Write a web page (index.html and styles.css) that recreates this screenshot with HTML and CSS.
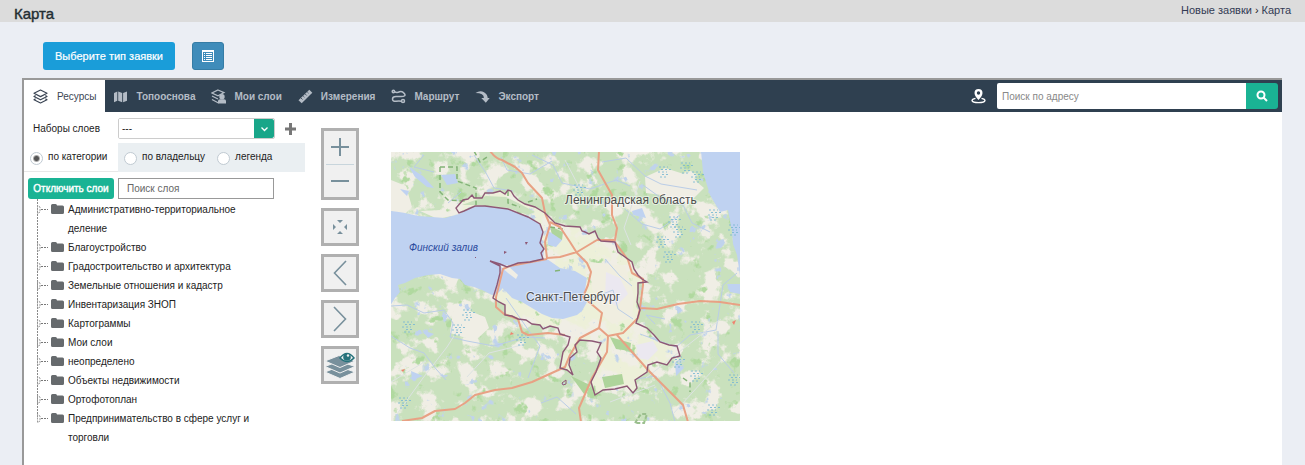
FILE: index.html
```html
<!DOCTYPE html>
<html lang="ru">
<head>
<meta charset="utf-8">
<title>Карта</title>
<link rel="stylesheet" href="styles.css">
</head>
<body>
<header class="page-head">
  <h1 class="page-title">Карта</h1>
  <nav class="crumbs" aria-label="Навигация"><a href="#">Новые заявки</a><span class="crumb-sep">›</span><a href="#">Карта</a></nav>
</header>
<div class="actions">
  <button type="button" class="btn-primary">Выберите тип заявки</button>
  <button type="button" class="btn-list" aria-label="Список">
    <svg width="12" height="12" viewBox="0 0 12 12"><path fill="#fff" fill-rule="evenodd" d="M0 0H12V12H0ZM1 2V11H11V2Z"/><path stroke="#fff" d="M2 3.500H3M4 3.500H10M2 5.500H3M4 5.500H10M2 7.500H3M4 7.500H10M2 9.500H3M4 9.500H10"/></svg>
  </button>
</div>
<main class="widget">
  <div class="toolbar">
    <div class="tabs">
      <button type="button" class="tab tab-active"><svg class="tab-icon" viewBox="0 0 15 15"><g fill="none" stroke="currentColor" stroke-width="1.200" stroke-linejoin="round"><path d="M7.500 1L14 4.300 7.500 7.600 1 4.300Z"/><path d="M2.600 6.600L1 7.500 7.500 10.800 14 7.500 12.400 6.600M2.600 9.800L1 10.700 7.500 14 14 10.700 12.400 9.800"/></g></svg>Ресурсы</button>
      <button type="button" class="tab"><svg class="tab-icon" viewBox="0 0 15 15"><path fill="currentColor" d="M1 4L4.300 2.500V11.800L1 13.300ZM5.200 2.500L9.200 4V13.300L5.200 11.800ZM10.100 4L14 2.500V11.800L10.100 13.300Z"/></svg>Топооснова</button>
      <button type="button" class="tab"><svg class="tab-icon" viewBox="0 0 15 15"><g fill="none" stroke="currentColor" stroke-width="1.200"><path d="M7 1L13 3.600 7 6.800 1 4ZM1 7L7 10M1 10.400L7.500 14"/></g><g fill="currentColor"><circle cx="11" cy="7.700" r="2.700"/><path d="M7 14.500V12Q7 10.500 9 10.300H13Q15 10.500 15 12V14.500Z"/></g></svg>Мои слои</button>
      <button type="button" class="tab"><svg class="tab-icon" viewBox="0 0 15 15"><path fill="currentColor" d="M.500 11.300L11.300.700 14.300 3.700 3.700 14.300Z"/><path stroke="#2f4050" stroke-width=".800" d="M3 9L4.500 10.500M5.200 7L6.400 8.200M7.200 5L8.700 6.500M9.300 3L10.500 4.200"/></svg>Измерения</button>
      <button type="button" class="tab"><svg class="tab-icon" viewBox="0 0 15 15"><g fill="none" stroke="currentColor" stroke-width="1.500"><path d="M3.500 2.800Q6 4 8.500 2.800T13.300 4.500 10 7.500H5Q1.500 7.500 1.500 10T5 12.300Q8 11.500 10.500 12.300"/><circle cx="2.400" cy="2.500" r="1.200"/><circle cx="12" cy="12" r="1.500"/></g></svg>Маршрут</button>
      <button type="button" class="tab"><svg class="tab-icon" viewBox="0 0 15 15"><path fill="currentColor" d="M.500 4Q5 1 9 3.200 12.700 5.500 12.700 9H14.700L10.800 13.700 6.300 9H8.900Q9 4 .500 4Z"/></svg>Экспорт</button>
    </div>
    <form class="address">
      <svg class="pin" width="15" height="16" viewBox="0 0 15 16"><path fill="#fff" fill-rule="evenodd" d="M7.500 1A4 4 0 0 1 11.500 5Q11.500 8 7.500 12 3.500 8 3.500 5A4 4 0 0 1 7.500 1ZM7.500 3.300A1.700 1.700 0 1 0 7.500 6.700 1.700 1.700 0 1 0 7.500 3.300Z"/><path fill="none" stroke="#fff" stroke-width="1.300" d="M4.500 10.300Q1 11 1 12.500 1.500 14.600 7.500 14.600T14 12.500Q14 11 10.500 10.300"/></svg>
      <input class="address-input" type="text" placeholder="Поиск по адресу" aria-label="Поиск по адресу">
      <button type="button" class="address-btn" aria-label="Найти"><svg width="12" height="12" viewBox="0 0 12 12"><g fill="none" stroke="#fff" stroke-width="2"><circle cx="5" cy="5" r="3.500"/><path d="M7.500 7.500L11 11"/></g></svg></button>
    </form>
  </div>
  <div class="content">
    <aside class="side">
      <div class="row-set">
        <label class="set-label" for="layer-set">Наборы слоев</label>
        <span class="select-box">
          <select id="layer-set"><option>---</option></select>
          <span class="select-arrow"><svg width="9" height="6" viewBox="0 0 9 6"><path fill="none" stroke="#fff" stroke-width="1.300" d="M1.500 1.500L4.500 4.500 7.500 1.500"/></svg></span>
        </span>
        <button type="button" class="add" aria-label="Добавить"><svg width="13" height="12" viewBox="0 0 13 12"><path stroke="#777" stroke-width="3" d="M1 6H12M6.500 0V12"/></svg></button>
      </div>
      <div class="row-mode">
        <label class="mode mode-on"><input type="radio" name="mode" checked>по категории</label>
        <div class="mode-rest">
          <label class="mode"><input type="radio" name="mode">по владельцу</label>
          <label class="mode"><input type="radio" name="mode">легенда</label>
        </div>
      </div>
      <div class="row-find">
        <button type="button" class="btn-off">Отключить слои</button>
        <input class="layer-input" type="text" placeholder="Поиск слоя" aria-label="Поиск слоя">
      </div>
      <svg class="defs" width="0" height="0"><defs><g id="folder"><path fill="none" stroke="#999" d="M.500 5.500V13.500L3 12V7Z" stroke-dasharray="2 1"/><path stroke="#777" stroke-dasharray="2 1" d="M4 9.500H11"/><path fill="#666a6d" d="M14 5.500Q14 4 15.500 4H18.500Q20 4 20 5.500H25.500Q27 5.500 27 7V12.500Q27 14 25.500 14H15.500Q14 14 14 12.500Z"/></g></defs></svg>
      <ul class="tree">
        <li><svg class="node" viewBox="0 0 28 19"><use href="#folder"/></svg><span>Административно-территориальное деление</span></li>
        <li><svg class="node" viewBox="0 0 28 19"><use href="#folder"/></svg><span>Благоустройство</span></li>
        <li><svg class="node" viewBox="0 0 28 19"><use href="#folder"/></svg><span>Градостроительство и архитектура</span></li>
        <li><svg class="node" viewBox="0 0 28 19"><use href="#folder"/></svg><span>Земельные отношения и кадастр</span></li>
        <li><svg class="node" viewBox="0 0 28 19"><use href="#folder"/></svg><span>Инвентаризация ЗНОП</span></li>
        <li><svg class="node" viewBox="0 0 28 19"><use href="#folder"/></svg><span>Картограммы</span></li>
        <li><svg class="node" viewBox="0 0 28 19"><use href="#folder"/></svg><span>Мои слои</span></li>
        <li><svg class="node" viewBox="0 0 28 19"><use href="#folder"/></svg><span>неопределено</span></li>
        <li><svg class="node" viewBox="0 0 28 19"><use href="#folder"/></svg><span>Объекты недвижимости</span></li>
        <li><svg class="node" viewBox="0 0 28 19"><use href="#folder"/></svg><span>Ортофотоплан</span></li>
        <li><svg class="node" viewBox="0 0 28 19"><use href="#folder"/></svg><span>Предпринимательство в сфере услуг и торговли</span></li>
      </ul>
    </aside>
    <div class="tools">
      <div class="tool zoom">
        <button type="button" aria-label="Приблизить"><svg width="20" height="20" viewBox="0 0 20 20"><path stroke="#78909c" stroke-width="2" d="M1 10H19M10 1V19"/></svg></button>
        <button type="button" aria-label="Отдалить"><svg width="20" height="20" viewBox="0 0 20 20"><path stroke="#78909c" stroke-width="2" d="M1 10H19"/></svg></button>
      </div>
      <button type="button" class="tool" aria-label="Весь экстент"><svg width="16" height="16" viewBox="0 0 16 16"><path fill="#78909c" d="M5 1H11L8 4ZM5 15H11L8 12ZM1 5V11L4 8ZM15 5V11L12 8Z"/></svg></button>
      <button type="button" class="tool" aria-label="Назад"><svg width="30" height="30" viewBox="0 0 30 30"><path fill="none" stroke="#78909c" stroke-width="1.600" d="M21 3L9.500 15 21 27"/></svg></button>
      <button type="button" class="tool" aria-label="Вперёд"><svg width="30" height="30" viewBox="0 0 30 30"><path fill="none" stroke="#78909c" stroke-width="1.600" d="M9 3L20.500 15 9 27"/></svg></button>
      <button type="button" class="tool" aria-label="Видимость слоёв"><svg width="30" height="30" viewBox="0 0 30 30"><g fill="#78909c" stroke="#f0f0f0"><path d="M0 22L14 16.500 30 22 15 28.500Z"/><path d="M0 16.500L14 11 30 16.500 15 23Z"/><path d="M0 11L14 5.500 30 11 15 17.500Z"/></g><path fill="#f0f0f0" stroke="#26727b" stroke-width="1.500" d="M15 8Q22 -1 29 8 22 15 15 8Z"/><circle cx="22" cy="7" r="3.800" fill="#26727b"/><circle cx="23" cy="5.500" r="1.200" fill="#eee"/></svg></button>
    </div>
    <div class="map">
      <svg width="350" height="274" viewBox="390 151 350 274" role="img" aria-label="Карта Санкт-Петербурга">
        <defs>
          <clipPath id="frame"><rect x="391" y="152" width="349" height="269"/></clipPath>
          <filter id="fields" x="0" y="0" width="1" height="1" color-interpolation-filters="sRGB"><feTurbulence type="fractalNoise" baseFrequency=".050" numOctaves="5" seed="8"/><feColorMatrix values="0 0 0 0 .941 0 0 0 0 .933 0 0 0 0 .898 10 0 0 0 -5.200"/></filter>
          <filter id="groves" x="0" y="0" width="1" height="1" color-interpolation-filters="sRGB"><feTurbulence type="fractalNoise" baseFrequency=".070" numOctaves="4" seed="23"/><feColorMatrix values="0 0 0 0 .690 0 0 0 0 .851 0 0 0 0 .624 0 9 0 0 -6.100"/></filter>
          <filter id="lakes" x="0" y="0" width="1" height="1" color-interpolation-filters="sRGB"><feTurbulence type="fractalNoise" baseFrequency=".080" numOctaves="4" seed="41"/><feColorMatrix values="0 0 0 0 .753 0 0 0 0 .827 0 0 0 0 .925 0 0 12 0 -8.300"/></filter>
          <g id="marsh" stroke="#7db9d3" stroke-width=".900" stroke-dasharray="2 2"><path d="M0 0H9M2 2.500H12M-1 5H8M3 7.500H11M1 10H7"/></g>
          <path id="city" d="M459 213L456 208 463 200 468 199 472 195 474 198 482 198 485 193 493 193 500 191 505 194 508 190 511 191 514 196 518 200 525 204 535 207 545 213 550 218 555 223 565 226 580 227 582 231 585 232 589 234 595 231 598 238 601 241 615 242 618 252 625 257 632 262 634 269 638 275 642 279 647 282 638 283 638 293 637 302 640 310 636 323 647 328 654 335 660 342 669 345 677 346 680 356 672 358 667 365 657 362 648 365 647 372 641 376 635 380 637 388 633 393 627 386 615 389 603 390 595 395 591 382 596 372 601 358 597 352 601 343 592 341 580 340 575 345 577 352 570 358 569 365 573 375 567 370 560 368 563 352 568 345 570 337 560 334 558 328 550 326 543 329 540 325 532 324 526 320 518 319 512 316 505 315 505 305 499 302 493 298 497 285 500 273 500 266 490 261 500 264 507 267 518 263 530 262 543 259 541 253 544 249 540 243 543 232 540 224 528 217 508 209 485 206 475 206 464 211Z"/>
        </defs>
        <g clip-path="url(#frame)">
          <rect x="390" y="151" width="350" height="271" fill="#c9e1bd"/>
          <use href="#city" fill="#edf0d9"/>
          <rect x="390" y="151" width="350" height="271" filter="url(#fields)"/>
          <rect x="390" y="151" width="350" height="271" filter="url(#groves)"/>
          <rect x="390" y="151" width="350" height="271" filter="url(#lakes)"/>
          <path fill="#f0eee5" d="M453 312L470 311 485 317 489 328 477 339 463 337 450 333ZM645 177L665 168 690 176 704 188 688 204 672 201 662 195 646 193ZM391 180L406 186 412 207 403 216 391 211ZM420 211L443 210 456 215 438 219Z"/>
          <path fill="#f0eee0" d="M590 262L625 266 634 296 632 318 612 324 597 310 592 289Z"/>
          <path fill="#ebe8f0" d="M606 272L620 278 628 294 616 306 605 299ZM636 345L653 341 658 350 648 360 638 358Z"/>
          <path fill="#aed49b" d="M550 226L563 232 562 240 553 240ZM610 337L631 343 630 351 616 349ZM571 376L590 385 584 394ZM602 377L622 374 624 384 605 388Z"/>
          <path fill="#c9e1bd" d="M462 205L486 196 506 197 518 203 535 212 528 215 508 208 482 205Z"/>
          <g fill="#bfd2f1">
            <path d="M390 211Q402 212 418 216L445 218 459 214 475 206 485 206 508 209 528 217 540 224 543 232 540 243 544 250 543 258 547 259 560 268 575 271 587 278 585 290 583 297 587 302 582 311 577 315 570 317 563 319 552 318 542 314 532 308 522 302 512 298 503 288 497 294 492 295 482 290 474 287 465 285 460 279 452 278 440 274 428 275 415 278 405 283 398 285 400 292 395 298 390 306Z"/>
            <path d="M701 151L703 172 710 195 720 212 728 210 732 232 733 244 737 255 740 276V151Z"/>
            <path d="M409 167L423 176 434 188 427 187 415 177ZM441 175L455 174 458 183 447 185ZM400 189L409 191 407 196ZM547 230L562 240 556 247 548 245ZM632 211L642 208 646 218 633 215ZM422 330L434 334 428 338ZM727 284H740V294L730 292ZM675 362L684 368 676 376ZM411 371L423 376 412 380Z"/>
          </g>
          <path fill="#f0eee5" d="M500 266L507 265 518 275 516 279 508 273Z"/>
          <g fill="none" stroke="#bacde7">
            <path d="M391 306L407 305 424 313 444 310 453 323 450 337 467 341 494 346 525 337 545 338M391 336L410 348 424 353 436 369 446 380M424 155L414 167 434 172M474 155L486 173 494 188 513 191M501 157L507 170 530 174 552 161M532 155L553 165 562 183 590 189 616 180 630 186M602 162L626 158 645 176 661 184 697 190M643 185L661 198 683 205 692 223 710 232M625 209L642 224 660 229 680 215M640 334L676 347 690 335 716 330 723 285 737 273M718 331L718 354 734 373M636 379L656 376 670 403 675 422M587 300L613 290 618 309 633 319M605 259L620 276 632 286M506 298L527 328 540 346 528 378M448 203L461 192M655 324L646 315 665 319M541 403L557 397 576 414"/>
            <path stroke="#dce3e2" d="M397 414L423 378 447 347 459 328M467 377L489 353 522 345M640 181L624 228 631 245M673 414L721 361M610 402L655 385M646 378L721 319M391 382L426 361M565 160L589 206"/>
          </g>
          <use href="#marsh" x="403" y="322"/><use href="#marsh" x="453" y="325"/><use href="#marsh" x="463" y="310"/><use href="#marsh" x="517" y="335"/><use href="#marsh" x="664" y="252"/><use href="#marsh" x="657" y="237"/><use href="#marsh" x="669" y="217"/><use href="#marsh" x="692" y="172"/><use href="#marsh" x="681" y="163"/><use href="#marsh" x="709" y="210"/><use href="#marsh" x="729" y="225"/><use href="#marsh" x="674" y="227"/><use href="#marsh" x="691" y="322"/><use href="#marsh" x="729" y="375"/><use href="#marsh" x="691" y="371"/><use href="#marsh" x="708" y="405"/><use href="#marsh" x="673" y="357"/><use href="#marsh" x="399" y="398"/><use href="#marsh" x="659" y="167"/><use href="#marsh" x="574" y="185"/>
          <g fill="none" stroke="#83b477" stroke-width="1.500" stroke-dasharray="5 3"><path d="M440 167H457V181L476 188 476 205M440 167V192L448 200 465 201M474 151L480 162 487 157M508 191V203L520 207M528 202L537 199M550 227L563 229M555 271L562 270M683 378L690 383 690 392"/></g>
          <g fill="none" stroke="#e8a184" stroke-width="2" stroke-linejoin="round">
            <path d="M490 151Q496 159 502 160L515 167 522 173 528 183 542 198 545 213 550 225 545 242 547 258 560 257 577 252 597 240 615 240 617 228 612 215 612 195 598 170 599 151M550 222L560 227 570 242 577 253 587 263 591 272 588 285 583 297 602 313 599 328 580 338 570 355 565 367 532 382 512 388 495 390 475 395 465 403 455 409 435 411 422 418 402 421M547 259L510 266 503 269 499 285 496 297 496 307 504 314 518 319 522 332 528 335 548 333 565 335"/>
            <path d="M615 242L628 260 632 273 643 279 643 285 640 308 657 309 678 304 700 301 720 302 740 305M640 308L638 318 623 333 608 336 599 328M608 336L607 352 592 378 579 408 581 422M617 335L648 370 683 405 688 422"/>
          </g>
          <use href="#city" fill="none" stroke="#8d5875" stroke-width="1.400"/>
          <g fill="#8d5875"><path d="M504 251L507 252 504 254ZM525 242L528 242 526 245ZM475 257H476V258H475Z"/><path fill="none" stroke="#8d5875" d="M562 383L566 380 566 384 563 385Z"/></g>
          <path fill="#ef836f" d="M511 332L514 334 510 335ZM401 370L405 369 403 372ZM732 322L736 320 734 325Z"/>
        </g>
        <path fill="none" stroke="#9bbf8e" stroke-width="2" stroke-dasharray="4 2" d="M635 423L641 414 647 414 644 423Z"/>
        <text class="sea" x="409" y="251">Финский залив</text>
        <text class="place" x="565" y="204">Ленинградская область</text>
        <text class="place" x="526" y="301">Санкт-Петербург</text>
      </svg>
    </div>
  </div>
</main>
</body>
</html>
```
FILE: styles.css
```css
* { box-sizing: border-box; }
body {
  margin: 0;
  min-height: 100vh;
  display: flex;
  flex-direction: column;
  background: #ebeef4;
  color: #222;
  font: 10px/19px "Liberation Sans", Arial, sans-serif;
}
button, input, select { font: inherit; color: inherit; margin: 0; }
button { border: 0; padding: 0; background: none; display: flex; align-items: center; justify-content: center; }
svg { display: block; flex: none; }

.page-head {
  display: flex;
  justify-content: space-between;
  height: 22px;
  padding: 0 14px;
  background: #dcdcdc;
}
.page-title { margin: 4px 0 0; font-size: 15px; line-height: 19px; font-weight: 400; color: #222d32; -webkit-text-stroke: 0.4px #222d32; }
.crumbs { display: flex; gap: 3px; font-size: 11px; line-height: 21px; }
.crumbs a { color: #333b54; text-decoration: none; }

.actions { display: flex; gap: 17px; padding: 20px 43px 8px; }
.btn-primary {
  height: 28px;
  padding: 0 12px;
  border-radius: 3px;
  background: #1a9dd9;
  color: #fff;
  font-size: 11px;
  -webkit-text-stroke: 0.2px #fff;
}
.btn-list { width: 32px; height: 28px; border: 1px solid #357ca5; border-radius: 3px; background: #3f8cba; }

.widget {
  flex: 1;
  display: flex;
  flex-direction: column;
  margin: 0 23px 0 22px;
  border: solid #999;
  border-width: 2px 0 0 2px;
  background: #fff;
}
.toolbar { display: flex; justify-content: space-between; height: 32px; background: #2f4050; }
.tabs { display: flex; }
.tab { gap: 8px; padding: 0 8px; color: #b4bcc6; font-weight: 700; }
.tab-active { gap: 9px; padding: 0 9px; background: #fff; color: #3b4554; font-weight: 400; }
.tab-icon { width: 15px; height: 15px; }
.address { display: flex; align-items: center; padding: 0 4px 0 0; }
.pin { margin-right: 11px; }
.address-input { width: 249px; height: 26px; padding: 0 5px; border: 0; border-radius: 2px 0 0 2px; background: #fff; }
.address-input::placeholder { color: #888; opacity: 1; }
.address-btn { width: 32px; height: 26px; border-radius: 0 3px 3px 0; background: #1ab394; }

.content { flex: 1; display: flex; align-items: flex-start; }
.side { width: 281px; }
.row-set { display: grid; grid-template-columns: 94px 157px 30px; align-items: center; height: 31px; padding-top: 2px; }
.set-label { padding-left: 9px; }
.select-box { display: grid; grid-template-columns: 1fr 20px; height: 21px; border: 1px solid #ccc; border-radius: 2px; overflow: hidden; }
.select-box select { grid-area: 1 / 1 / 2 / 3; appearance: none; border: 0; padding: 0 3px; background: #fff; }
.select-arrow { grid-area: 1 / 2; display: flex; align-items: center; justify-content: center; background: #18a689; border-radius: 0 2px 2px 0; pointer-events: none; z-index: 1; }
.row-mode { display: grid; grid-template-columns: 94px 1fr; height: 29px; }
.mode { display: flex; gap: 5px; line-height: 28px; }
.mode input {
  appearance: none;
  width: 13px;
  height: 13px;
  margin-top: 9px;
  border: 1px solid #c0cad2;
  border-radius: 50%;
  background: #fff;
}
.mode input:checked { background: radial-gradient(#555 0 2px, #fff 4px); }
.mode-on { padding-left: 6px; border-bottom: 1px solid #e8e8e8; }
.mode-rest { display: flex; gap: 12px; padding-left: 6px; background: #eaeff2; }
.row-find { display: flex; gap: 4px; padding: 6px 4px 0; }
.btn-off { width: 86px; height: 21px; border-radius: 3px; background: #1ab394; color: #fff; -webkit-text-stroke: 0.4px #fff; }
.layer-input { width: 156px; height: 21px; padding: 0 8px; border: 1px solid #999; background: #fff; }
.layer-input::placeholder { color: #666; opacity: 1; }
.defs { position: absolute; }
.tree { list-style: none; margin: 0 0 0 13px; padding: 1px 0 0; background: repeating-linear-gradient(#888 0 2px, transparent 2px 3px) 0 0 / 1px calc(100% - 28px) no-repeat; }
.tree li { display: flex; gap: 3px; width: 218px; }
.node { width: 28px; height: 19px; }

.tools { display: grid; gap: 8px; padding: 16px 0 0 16px; }
.tool { width: 38px; height: 38px; border: 3px solid #b0b0b0; background: #f0f0f0; }
.zoom { display: grid; height: 72px; padding: 0 2px; }
.zoom button + button { border-top: 1px solid #c8d5dc; }
.map { padding: 39px 0 0 31px; }
.place { font-size: 12px; fill: #4d4d4d; stroke: #fff; stroke-opacity: 0.5; stroke-width: 2px; paint-order: stroke; }
.sea { font-size: 10px; font-style: italic; fill: #2b4a9d; }
```
